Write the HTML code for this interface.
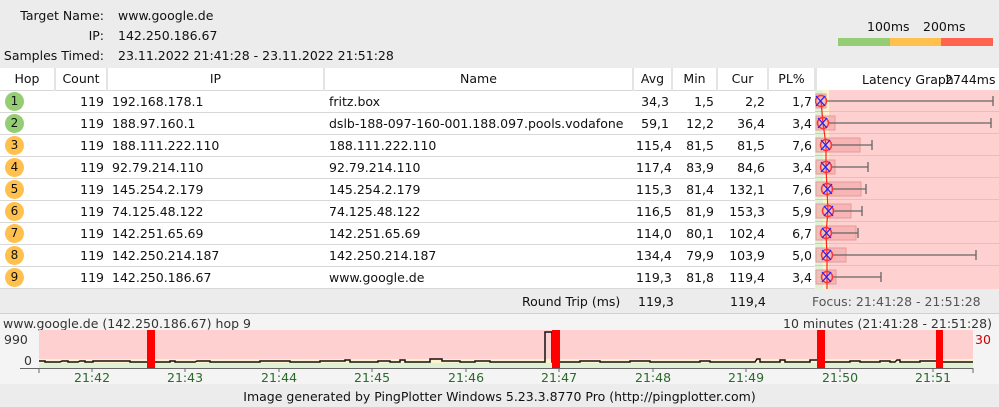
<!DOCTYPE html><html><head><meta charset="utf-8"><style>
*{margin:0;padding:0;box-sizing:border-box}
body{width:999px;height:407px;background:#ececec;font-family:"DejaVu Sans","Liberation Sans",sans-serif;font-size:12.5px;color:#111;position:relative;overflow:hidden}
.a{position:absolute;white-space:nowrap}
.r{text-align:right}
.c{text-align:center}
table{position:absolute;left:0;top:68px;border-collapse:collapse;width:815px;table-layout:fixed}
td,th{height:22px;padding:0 5px;font-weight:normal;border-bottom:1px solid #d8d8d8;white-space:nowrap;overflow:hidden}
td.r{padding:0 3px}
th{background:#fff;border-right:2px solid #e4e4e4;text-align:center}
td{background:#fff}
.hop{display:inline-block;width:19px;height:19px;border-radius:50%;text-align:center;line-height:19px;font-size:12px}
.g{background:#94cd74}.y{background:#ffc04e}
</style></head><body>
<div class="a r" style="left:0;width:104px;top:8px">Target Name:</div><div class="a" style="left:118px;top:8px">www.google.de</div>
<div class="a r" style="left:0;width:104px;top:28px">IP:</div><div class="a" style="left:118px;top:28px">142.250.186.67</div>
<div class="a r" style="left:0;width:104px;top:48px">Samples Timed:</div><div class="a" style="left:118px;top:48px">23.11.2022 21:41:28 - 23.11.2022 21:51:28</div>
<div class="a" style="left:867px;top:19px">100ms</div><div class="a" style="left:923px;top:19px">200ms</div>
<div class="a" style="left:838px;top:38px;width:52px;height:8px;background:#94cd74"></div>
<div class="a" style="left:890px;top:38px;width:51px;height:8px;background:#ffc04e"></div>
<div class="a" style="left:941px;top:38px;width:52px;height:8px;background:#ff6450"></div>
<table>
<colgroup><col style="width:55px"><col style="width:52px"><col style="width:217px"><col style="width:309px"><col style="width:39px"><col style="width:45px"><col style="width:51px"><col style="width:47px"></colgroup>
<tr><th>Hop</th><th>Count</th><th>IP</th><th>Name</th><th>Avg</th><th>Min</th><th>Cur</th><th>PL%</th></tr>
<tr><td><span class="hop g">1</span></td><td class="r">119</td><td>192.168.178.1</td><td>fritz.box</td><td class="r">34,3</td><td class="r">1,5</td><td class="r">2,2</td><td class="r">1,7</td></tr>
<tr><td><span class="hop g">2</span></td><td class="r">119</td><td>188.97.160.1</td><td>dslb-188-097-160-001.188.097.pools.vodafone</td><td class="r">59,1</td><td class="r">12,2</td><td class="r">36,4</td><td class="r">3,4</td></tr>
<tr><td><span class="hop y">3</span></td><td class="r">119</td><td>188.111.222.110</td><td>188.111.222.110</td><td class="r">115,4</td><td class="r">81,5</td><td class="r">81,5</td><td class="r">7,6</td></tr>
<tr><td><span class="hop y">4</span></td><td class="r">119</td><td>92.79.214.110</td><td>92.79.214.110</td><td class="r">117,4</td><td class="r">83,9</td><td class="r">84,6</td><td class="r">3,4</td></tr>
<tr><td><span class="hop y">5</span></td><td class="r">119</td><td>145.254.2.179</td><td>145.254.2.179</td><td class="r">115,3</td><td class="r">81,4</td><td class="r">132,1</td><td class="r">7,6</td></tr>
<tr><td><span class="hop y">6</span></td><td class="r">119</td><td>74.125.48.122</td><td>74.125.48.122</td><td class="r">116,5</td><td class="r">81,9</td><td class="r">153,3</td><td class="r">5,9</td></tr>
<tr><td><span class="hop y">7</span></td><td class="r">119</td><td>142.251.65.69</td><td>142.251.65.69</td><td class="r">114,0</td><td class="r">80,1</td><td class="r">102,4</td><td class="r">6,7</td></tr>
<tr><td><span class="hop y">8</span></td><td class="r">119</td><td>142.250.214.187</td><td>142.250.214.187</td><td class="r">134,4</td><td class="r">79,9</td><td class="r">103,9</td><td class="r">5,0</td></tr>
<tr><td><span class="hop y">9</span></td><td class="r">119</td><td>142.250.186.67</td><td>www.google.de</td><td class="r">119,3</td><td class="r">81,8</td><td class="r">119,4</td><td class="r">3,4</td></tr>
</table>
<div class="a" style="left:815px;top:68px;width:184px;height:22px;background:#fff;border-left:2px solid #e4e4e4"></div>
<div class="a" style="left:862px;top:72px">Latency Graph</div><div class="a" style="left:945px;top:72px">2744ms</div>
<svg class="a" style="left:815px;top:90px" width="184" height="199">
<rect x="1" y="0" width="183" height="199" fill="#ffd0d0"/>
<rect x="1" y="0" width="7" height="199" fill="#dff0d4"/>
<rect x="8" y="0" width="6" height="199" fill="#fff1cc"/>
<g stroke="#e0c0c0" stroke-width="1"><line x1="0" x2="184" y1="21.5" y2="21.5"/><line x1="0" x2="184" y1="43.5" y2="43.5"/><line x1="0" x2="184" y1="65.5" y2="65.5"/><line x1="0" x2="184" y1="87.5" y2="87.5"/><line x1="0" x2="184" y1="109.5" y2="109.5"/><line x1="0" x2="184" y1="131.5" y2="131.5"/><line x1="0" x2="184" y1="153.5" y2="153.5"/><line x1="0" x2="184" y1="175.5" y2="175.5"/></g>
<g fill="#f4a4a4" fill-opacity=".6" stroke="#e69a9a">
<rect x="1" y="4" width="10" height="14"/><rect x="1" y="26" width="19" height="14"/><rect x="1" y="48" width="44" height="14"/><rect x="1" y="70" width="19" height="14"/><rect x="1" y="92" width="45" height="14"/><rect x="1" y="114" width="35" height="14"/><rect x="1" y="136" width="40" height="14"/><rect x="1" y="158" width="30" height="14"/><rect x="1" y="180" width="20" height="14"/></g>
<g stroke="#666" stroke-width="1.3" fill="none">
<path d="M11 11H178M178 6V16"/><path d="M13 33H176M176 28V38"/><path d="M16 55H57M57 50V60"/><path d="M16 77H53M53 72V82"/><path d="M17 99H51M51 94V104"/><path d="M18 121H47M47 116V126"/><path d="M16 143H43M43 138V148"/><path d="M17 165H161M161 160V170"/><path d="M17 187H66M66 182V192"/></g>
<polyline fill="none" stroke="#f22" stroke-width="1.2" points="6,11 8,33 11,55 11,77 12,99 13,121 11,143 12,165 12,187 12,199"/>
<g fill="none" stroke="#f33" stroke-width="1.5"><circle cx="6" cy="11" r="5.5"/><circle cx="8" cy="33" r="5.5"/><circle cx="11" cy="55" r="5.5"/><circle cx="11" cy="77" r="5.5"/><circle cx="12" cy="99" r="5.5"/><circle cx="13" cy="121" r="5.5"/><circle cx="11" cy="143" r="5.5"/><circle cx="12" cy="165" r="5.5"/><circle cx="12" cy="187" r="5.5"/></g>
<g stroke="#22f" stroke-width="1.3"><path d="M1 6l9 10M10 6l-9 10"/><path d="M3 28l9 10M12 28l-9 10"/><path d="M6 50l9 10M15 50l-9 10"/><path d="M6 72l9 10M15 72l-9 10"/><path d="M8 94l9 10M17 94l-9 10"/><path d="M9 116l9 10M18 116l-9 10"/><path d="M7 138l9 10M16 138l-9 10"/><path d="M7 160l9 10M16 160l-9 10"/><path d="M7 182l9 10M16 182l-9 10"/></g>
</svg>
<div class="a" style="left:522px;top:294px">Round Trip (ms)</div>
<div class="a" style="left:638px;top:294px">119,3</div><div class="a" style="left:730px;top:294px">119,4</div>
<div class="a" style="left:812px;top:294px;color:#555">Focus: 21:41:28 - 21:51:28</div>
<div class="a" style="left:0;top:313px;width:999px;height:71px;background:#f4f4f4;border-top:1px solid #d0d0d0"></div>
<div class="a" style="left:3px;top:316px;color:#333">www.google.de (142.250.186.67) hop 9</div>
<div class="a" style="left:783px;top:316px;color:#333">10 minutes (21:41:28 - 21:51:28)</div>
<div class="a" style="left:4px;top:332px;color:#333">990</div><div class="a" style="left:24px;top:353px;color:#333">0</div>
<div class="a" style="left:975px;top:332px;color:#c00">30</div>
<svg class="a" style="left:0;top:330px" width="999" height="50">
<rect x="39" y="0" width="934" height="38" fill="#ffd0d0"/>
<rect x="39" y="29" width="934" height="4" fill="#fff1cc"/>
<rect x="39" y="33" width="934" height="5" fill="#dff0d4"/>
<polyline fill="none" stroke="#111" stroke-width="1.5" points="39,31 45,31 45,32 60,32 62,31 68,31 68,32 78,32 80,31 85,31 85,32 93,32 93,31 130,31 130,32 147,32 170,32 170,31 175,31 175,32 195,32 197,31 210,31 210,32 260,32 260,31 290,31 290,32 320,32 320,31 345,31 345,30 350,30 350,32 378,32 378,31 390,31 390,32 400,32 400,30 405,30 405,32 430,32 430,29 442,29 442,31 460,31 460,32 475,32 475,31 490,31 490,32 545,32 545,2 552,2 552,32 580,32 580,31 600,31 600,32 630,32 630,31 650,31 650,32 700,32 700,31 710,31 710,32 755,32 757,29 760,29 760,32 780,32 780,30 785,30 785,32 810,32 810,30 817,30 825,32 850,32 850,31 860,31 860,32 880,32 880,31 890,31 890,32 895,32 897,30 900,30 900,32 920,32 920,31 936,31 943,32 973,32"/>
<g fill="#f00"><rect x="147" y="0" width="8" height="38"/><rect x="552" y="0" width="8" height="38"/><rect x="817" y="0" width="8" height="38"/><rect x="936" y="0" width="7" height="38"/></g>
<path d="M20 38.5H973M39 38V43M973 38V43" stroke="#666" fill="none"/>
<g stroke="#666"><line x1="92" x2="92" y1="38" y2="42"/><line x1="185" x2="185" y1="38" y2="42"/><line x1="279" x2="279" y1="38" y2="42"/><line x1="372" x2="372" y1="38" y2="42"/><line x1="466" x2="466" y1="38" y2="42"/><line x1="559" x2="559" y1="38" y2="42"/><line x1="653" x2="653" y1="38" y2="42"/><line x1="746" x2="746" y1="38" y2="42"/><line x1="840" x2="840" y1="38" y2="42"/><line x1="933" x2="933" y1="38" y2="42"/></g>
</svg>
<div style="color:#2a6a2a">
<div class="a" style="left:74px;top:370px">21:42</div><div class="a" style="left:167px;top:370px">21:43</div><div class="a" style="left:261px;top:370px">21:44</div><div class="a" style="left:354px;top:370px">21:45</div><div class="a" style="left:448px;top:370px">21:46</div><div class="a" style="left:541px;top:370px">21:47</div><div class="a" style="left:635px;top:370px">21:48</div><div class="a" style="left:728px;top:370px">21:49</div><div class="a" style="left:822px;top:370px">21:50</div><div class="a" style="left:915px;top:370px">21:51</div>
</div>
<div class="a c" style="left:0;width:999px;top:389px">Image generated by PingPlotter Windows 5.23.3.8770 Pro (http://pingplotter.com)</div>
</body></html>
